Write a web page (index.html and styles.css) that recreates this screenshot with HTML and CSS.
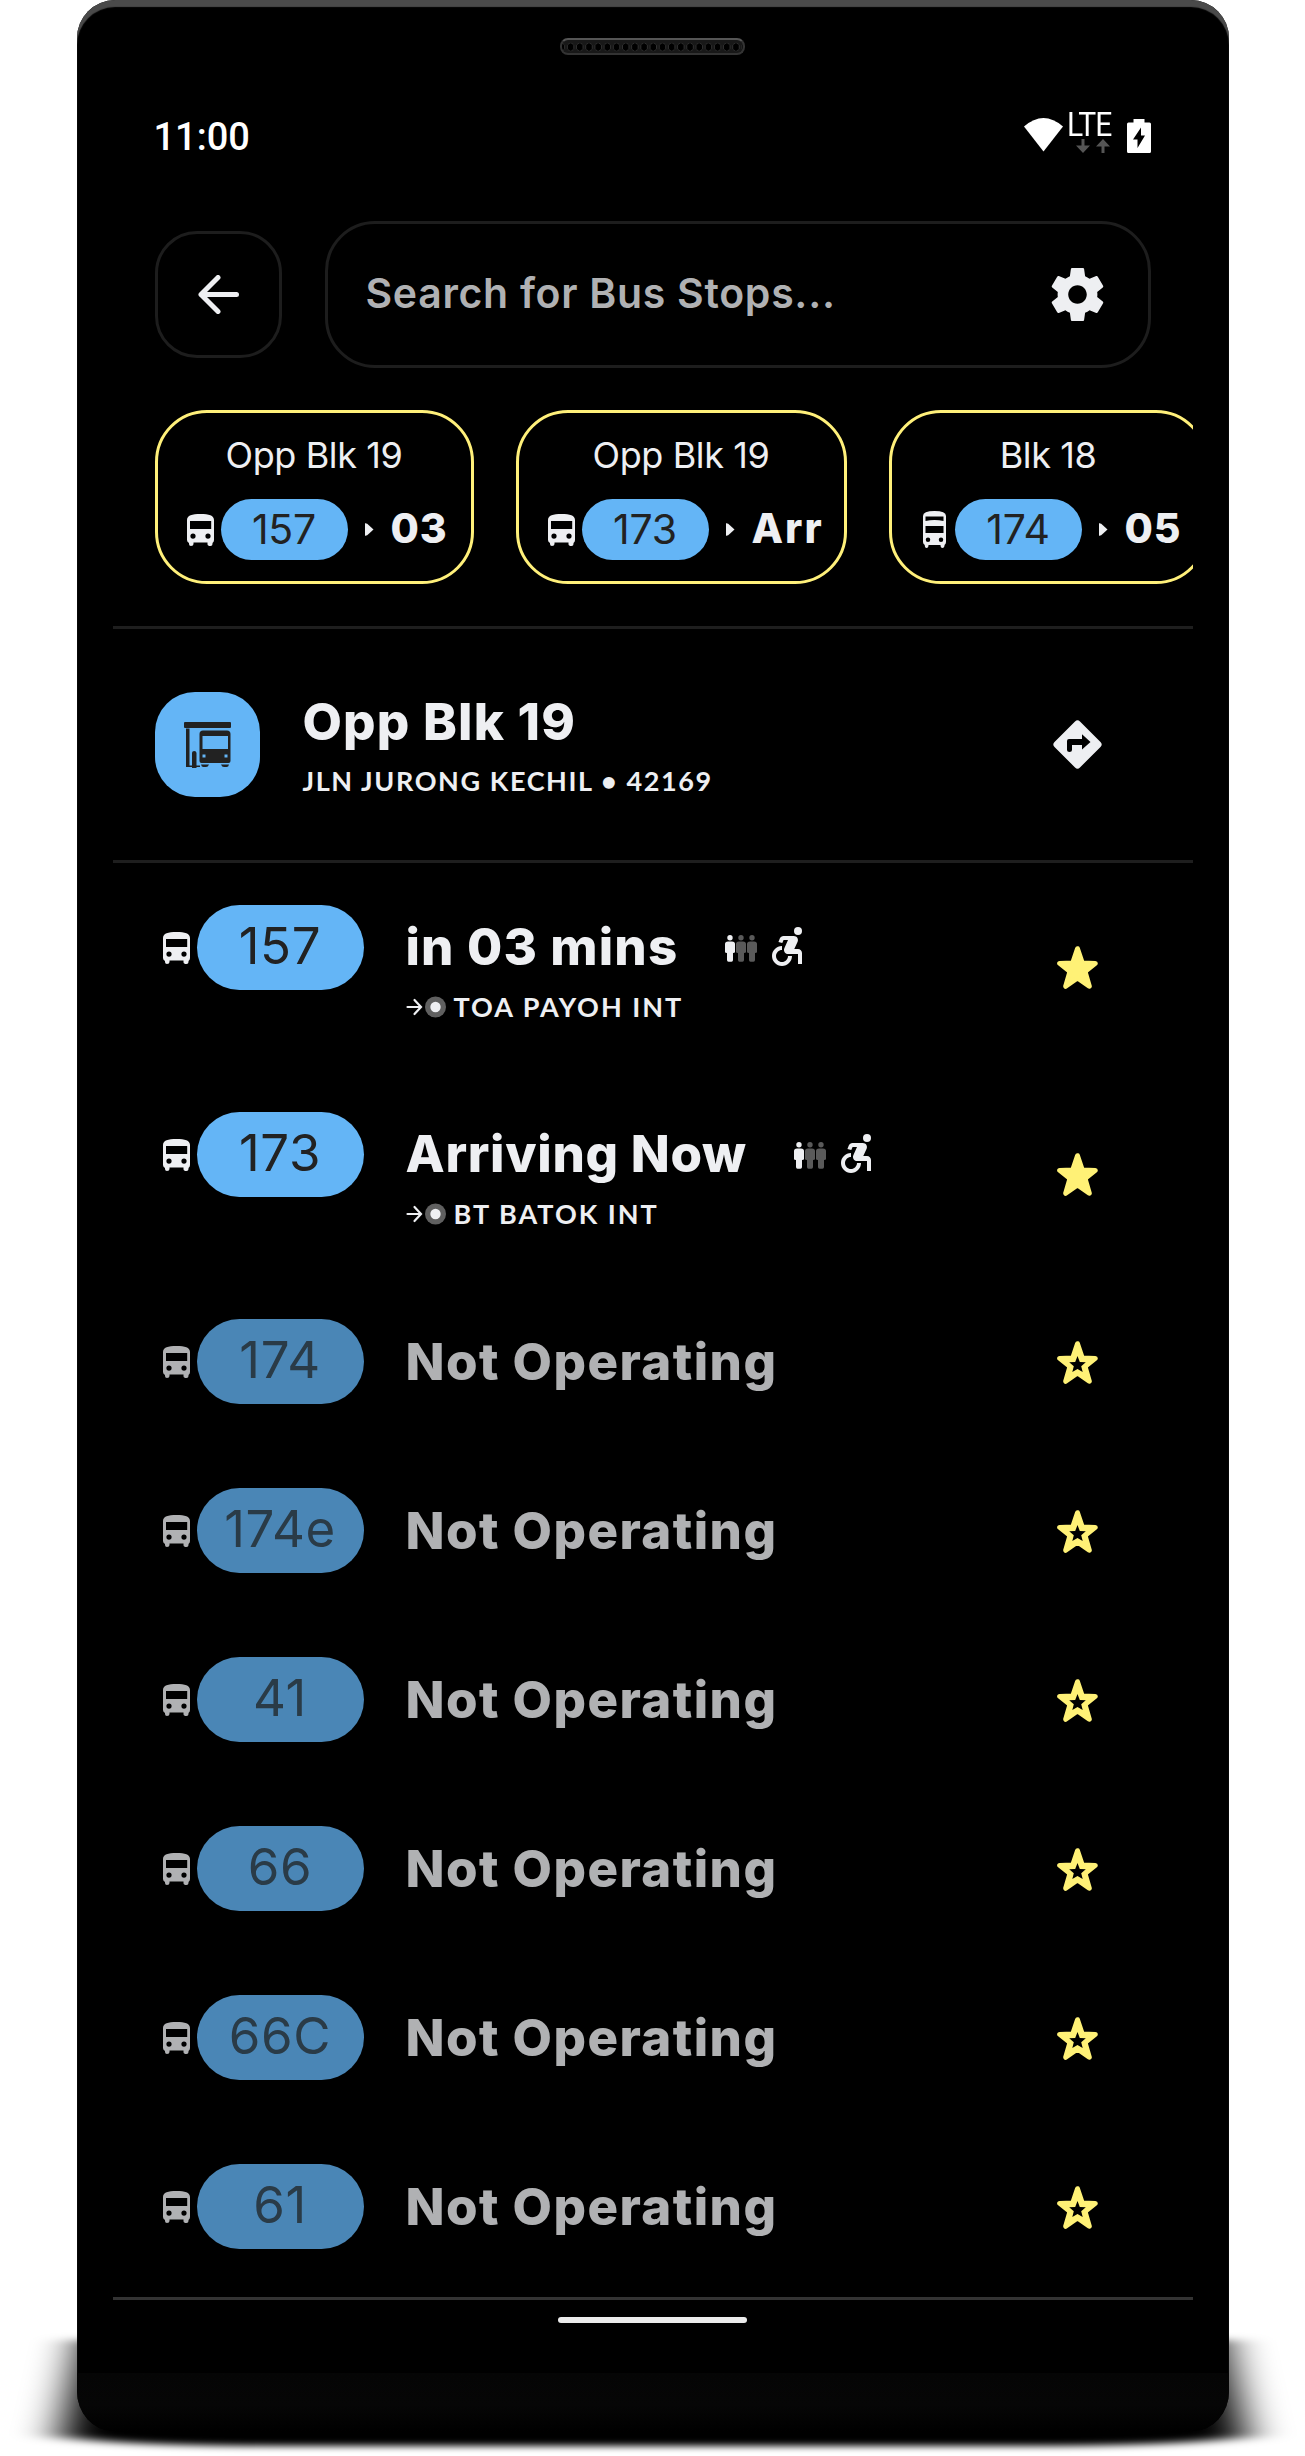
FILE: index.html
```html
<!DOCTYPE html>
<html lang="en">
<head>
<meta charset="utf-8">
<title>Bus Stops</title>
<link rel="stylesheet" href="styles.css">
</head>
<body>
<svg width="0" height="0" class="sprite" aria-hidden="true">
  <symbol id="bus" viewBox="0 0 27 32"><path fill-rule="evenodd" d="M0 6C0 1.500 5 0 13.500 0S27 1.500 27 6V26Q27 28 25.500 29V30Q25.500 32 23.500 32Q20.500 32 20.500 30V28.500H6.500V30Q6.500 32 4 32Q2 32 2 30V29Q0 28 0 26ZM3 7V15H24.200V7ZM6 19.500A2.600 2.600 0 1 0 6 24.700A2.600 2.600 0 1 0 6 19.500M21 19.500A2.600 2.600 0 1 0 21 24.700A2.600 2.600 0 1 0 21 19.500"/></symbol>
  <symbol id="decker" viewBox="0 0 23 37"><path fill-rule="evenodd" d="M0 5Q0 0 11.500 0T23 5V31Q23 33 21.500 34V35Q21 37 19.500 37Q17.500 37 17.500 34H5.500Q5.500 37 3.500 37Q2 37 1.800 35V34Q0 33 0 31ZM2.500 5.500V10Q11.500 8 20.500 10V5.500ZM2.500 15V22H20.500V15ZM5 26.500A2.200 2.200 0 1 0 5 31A2.200 2.200 0 1 0 5 26.500M18 26.500A2.200 2.200 0 1 0 18 31A2.200 2.200 0 1 0 18 26.500"/></symbol>
  <symbol id="person" viewBox="0 0 10 27"><circle cx="5" cy="2.800" r="2.700"/><path d="M3 6.500H7Q10 6.500 10 9V17Q10 18 8 18V25Q8 26.700 6.500 26.700H3.500Q2 26.700 2 25V18Q0 18 0 17V9Q0 6.500 3 6.500Z"/></symbol>
  <symbol id="wheelchair" viewBox="5 2.500 15 19.500"><circle cx="18" cy="4.540" r="2"/><path d="M15 17h-2c0 1.650-1.350 3-3 3s-3-1.350-3-3 1.350-3 3-3v-2c-2.760 0-5 2.240-5 5s2.240 5 5 5 5-2.240 5-5zM18 13.500h-1.860l1.670-3.670C18.420 8.500 17.440 7 15.960 7h-5.200c-.810 0-1.540.470-1.870 1.200L8.220 10l1.920.530.650-1.530H13l-1.830 4.100c-.600 1.330.390 2.900 1.850 2.900H18v5h2v-5.500c0-1.100-.900-2-2-2z"/></symbol>
  <symbol id="star" viewBox="0 0 41 43"><path d="M20.500 2.700L25.300 17L38.300 17.400L28 25.500L32.300 40.300L20.500 32L8.700 40.300L13 25.500L2.700 17.400L15.700 17Z" stroke="#fff176" stroke-width="5" stroke-linejoin="round"/></symbol>
  <symbol id="star-open" viewBox="0 0 41 43"><use href="#star"/><path fill="#000" d="M20.500 15L22.800 21L28.800 21.300L24.200 25.200L25.700 31L20.500 28L15.300 31L16.800 25.200L12.200 21.300L18.200 21Z"/></symbol>
  <symbol id="dest" viewBox="0 0 40 22"><path d="M1.500 11H14.500M8.500 4L15 11L8.500 18" fill="none" stroke="#eeeff2" stroke-width="2.200" stroke-linecap="round"/><circle cx="29.500" cy="11" r="10.500" fill="#606060"/><circle cx="29.500" cy="11" r="5.200"/></symbol>
</svg>

<svg class="ground-shadow" width="1305" height="156" viewBox="0 2300 1305 156">
  <defs><filter id="soft" x="-10%" y="-50%" width="120%" height="200%"><feGaussianBlur stdDeviation="22 3.500"/></filter></defs>
  <path filter="url(#soft)" d="M82 2340H1224Q1237 2400 1246 2436Q1200 2445 1050 2446H255Q105 2445 60 2436Q69 2400 82 2340Z"/>
</svg>

<div class="phone">
  <div class="speaker"></div>
  <div class="screen">
    <div class="status">
      <span class="clock">11:00</span>
      <div class="signals">
        <svg width="39" height="34" viewBox="0 0 39 34"><path d="M0 8.500Q19.500 -8.500 39 8.500L19.500 33.500Z"/></svg>
        <div class="network"><span>LTE</span>
          <svg width="34" height="14" viewBox="0 0 34 14"><path fill="#555" d="M5.500 0H8.500V6.500H14L7 14L0 6.500H5.500ZM25.500 14H28.500V7.500H34L27 0L20 7.500H25.500Z"/></svg>
        </div>
        <svg class="battery" width="24" height="34" viewBox="0 0 24 34"><path fill-rule="evenodd" d="M6.500 0H17.500V3.500H22.500Q24 3.500 24 5V32.500Q24 34 22.500 34H1.500Q0 34 0 32.500V5Q0 3.500 1.500 3.500H6.500ZM14 8.500L6 20.500H10.500V29L18 16.500H14Z"/></svg>
      </div>
    </div>

    <header class="toolbar">
      <button class="back"><svg width="41" height="39" viewBox="0 0 41 39"><path d="M38.500 19.500H3M20 2.500L3 19.500L20 36.500" fill="none" stroke="#eeeff2" stroke-width="5" stroke-linecap="round" stroke-linejoin="round"/></svg></button>
      <div class="search"><span>Search for Bus Stops...</span>
        <svg width="53" height="53" viewBox="2 2 20 20"><path d="M19.430 12.980c.040-.320.070-.640.070-.980s-.030-.660-.070-.980l2.110-1.650c.190-.150.240-.420.120-.640l-2-3.460c-.120-.220-.390-.300-.610-.220l-2.490 1c-.520-.400-1.080-.730-1.690-.980l-.380-2.650C14.460 2.180 14.250 2 14 2h-4c-.250 0-.460.180-.490.420l-.380 2.650c-.610.250-1.170.590-1.690.980l-2.490-1c-.230-.090-.490 0-.610.220l-2 3.460c-.130.220-.070.490.120.640l2.110 1.650c-.040.320-.070.650-.070.980s.030.660.070.980l-2.110 1.650c-.190.150-.240.420-.120.640l2 3.460c.120.220.390.300.610.220l2.490-1c.520.400 1.080.730 1.690.980l.380 2.650c.030.240.240.420.490.420h4c.250 0 .460-.180.490-.420l.380-2.650c.610-.250 1.170-.590 1.690-.980l2.490 1c.230.090.490 0 .610-.220l2-3.460c.120-.220.070-.490-.120-.640l-2.110-1.650zM12 15.500c-1.930 0-3.500-1.570-3.500-3.500s1.570-3.500 3.500-3.500 3.500 1.570 3.500 3.500-1.570 3.500-3.500 3.500z"/></svg>
      </div>
    </header>

    <div class="favs">
      <div class="fav"><span class="fav-stop">Opp Blk 19</span>
        <div class="fav-line"><svg width="27" height="32"><use href="#bus"/></svg><span class="pill small">157</span><i class="caret"></i><b>03</b></div></div>
      <div class="fav wide"><span class="fav-stop">Opp Blk 19</span>
        <div class="fav-line"><svg width="27" height="32"><use href="#bus"/></svg><span class="pill small">173</span><i class="caret"></i><b class="arr">Arr</b></div></div>
      <div class="fav"><span class="fav-stop">Blk 18</span>
        <div class="fav-line"><svg width="27" height="37"><use href="#decker"/></svg><span class="pill small">174</span><i class="caret"></i><b>05</b></div></div>
    </div>

    <section class="stop">
      <div class="stop-icon"><svg width="47" height="46" viewBox="0 0 47 46"><path fill="#222" fill-rule="evenodd" d="M1 0H46Q47 0 47 1V5Q47 6 46 6H1Q0 6 0 5V1Q0 0 1 0ZM2 6.500H5.500V43.500H8V31Q8 29 10.200 29T12.500 31V43.500H16V45H12.500V46H8V45H2ZM15.500 12Q15.500 8.500 19 8.500H43Q46.500 8.500 46.500 12V39Q46.500 41 44.500 41H17.500Q15.500 41 15.500 39ZM18.500 14V27H44V14ZM18.500 32.500V35.500H21.500V32.500ZM40.500 32.500V35.500H43.500V32.500ZM17 42.500H25Q24 45 22 45H19.500Q17.500 45 17 42.500ZM37 42.500H45Q44.500 45 42.500 45H40Q38 45 37 42.500Z"/></svg></div>
      <div class="stop-text"><h1>Opp Blk 19</h1><p>JLN JURONG KECHIL • 42169</p></div>
      <svg class="directions" width="53" height="53" viewBox="0 0 53 53"><rect x="8.500" y="8.500" width="36" height="36" rx="3.500" transform="rotate(45 26.500 26.500)"/><path fill="#000" d="M16 23Q16 21 18 21H31V16.200L39.500 24L31 31.500V27H21V32Q21 34 18.500 34T16 32Z"/></svg>
    </section>

    <main class="services">
      <div class="service tall">
        <svg class="bus" width="27" height="32"><use href="#bus"/></svg><span class="pill">157</span>
        <div class="info"><div class="eta"><b class="mins">in 03 mins</b><span class="load"><svg><use href="#person"/></svg><svg><use href="#person"/></svg><svg><use href="#person"/></svg></span><svg width="30" height="39"><use href="#wheelchair"/></svg></div>
          <div class="dest"><svg width="40" height="22"><use href="#dest"/></svg><span>TOA PAYOH INT</span></div></div>
        <svg class="star"><use href="#star"/></svg>
      </div>
      <div class="service tall">
        <svg class="bus" width="27" height="32"><use href="#bus"/></svg><span class="pill">173</span>
        <div class="info"><div class="eta"><b class="now">Arriving Now</b><span class="load"><svg><use href="#person"/></svg><svg><use href="#person"/></svg><svg><use href="#person"/></svg></span><svg width="30" height="39"><use href="#wheelchair"/></svg></div>
          <div class="dest"><svg width="40" height="22"><use href="#dest"/></svg><span>BT BATOK INT</span></div></div>
        <svg class="star"><use href="#star"/></svg>
      </div>
      <div class="service off"><svg class="bus" width="27" height="32"><use href="#bus"/></svg><span class="pill">174</span><div class="info"><div class="eta"><b>Not Operating</b></div></div><svg class="star"><use href="#star-open"/></svg></div>
      <div class="service off"><svg class="bus" width="27" height="32"><use href="#bus"/></svg><span class="pill">174e</span><div class="info"><div class="eta"><b>Not Operating</b></div></div><svg class="star"><use href="#star-open"/></svg></div>
      <div class="service off"><svg class="bus" width="27" height="32"><use href="#bus"/></svg><span class="pill">41</span><div class="info"><div class="eta"><b>Not Operating</b></div></div><svg class="star"><use href="#star-open"/></svg></div>
      <div class="service off"><svg class="bus" width="27" height="32"><use href="#bus"/></svg><span class="pill">66</span><div class="info"><div class="eta"><b>Not Operating</b></div></div><svg class="star"><use href="#star-open"/></svg></div>
      <div class="service off"><svg class="bus" width="27" height="32"><use href="#bus"/></svg><span class="pill">66C</span><div class="info"><div class="eta"><b>Not Operating</b></div></div><svg class="star"><use href="#star-open"/></svg></div>
      <div class="service off"><svg class="bus" width="27" height="32"><use href="#bus"/></svg><span class="pill">61</span><div class="info"><div class="eta"><b>Not Operating</b></div></div><svg class="star"><use href="#star-open"/></svg></div>
    </main>
    <nav class="home"><div class="home-bar"></div></nav>
  </div>
  <div class="chin"></div>
</div>
</body>
</html>
```
FILE: styles.css
```css
* { box-sizing: border-box; }
body { margin: 0; width: 1305px; height: 2456px; position: relative; overflow: hidden; background: #fff; font-family: Inter, "Liberation Sans", sans-serif; color: #eeeff2; }
svg { fill: #eeeff2; flex: none; display: block; }
.sprite { position: absolute; }
.ground-shadow { position: absolute; left: 0; bottom: 0; fill: #000; }
.ground-shadow path { fill: #000; }

.phone { position: relative; width: 1152px; height: 2431px; margin: 0 auto; padding: 38px 36px 0; background: #000; border-radius: 38px 38px 36px 36px / 38px 38px 40px 40px; box-shadow: inset 0 7px 1px #4a4a4a; overflow: hidden; display: flex; flex-direction: column; }
.speaker { width: 185px; height: 17px; margin: 0 auto; border-radius: 8px; border: 2px solid #333; border-top-color: #555; background: radial-gradient(ellipse 3.300px 4px at 50% 54%, #000 85%, #363636 100%, #181818 115%) 4px 0 / 9.200px 13px repeat-x #181818; }
.screen { display: flex; flex-direction: column; width: 1080px; height: 2318px; }

.status { height: 166px; padding: 60px 42px 0 41px; display: flex; justify-content: space-between; }
.clock { font: 500 38px/45px Roboto, sans-serif; color: #fff; }
.signals { display: flex; height: 38px; align-items: flex-end; }
.signals svg { fill: #fff; }
.signals > svg:first-child { margin-bottom: 1px; }
.network { width: 46px; margin-left: 4px; height: 38px; }
.network span { display: block; font: 400 33px/20px Roboto, sans-serif; height: 24px; color: #fff; transform: scaleX(.91); transform-origin: 0 0; letter-spacing: -1px; }
.network svg { margin-left: 9px; }
.battery { margin-left: 14px; }

.toolbar { display: flex; align-items: center; gap: 43px; padding: 0 42px; height: 147px; }
.back { width: 127px; height: 127px; padding: 0; border: 3px solid #1d1d1d; border-radius: 42px; background: none; display: flex; align-items: center; justify-content: center; }
.search { flex: 1; height: 147px; border: 3px solid #1d1d1d; border-radius: 50px; padding: 0 44px 0 38px; display: flex; align-items: center; justify-content: space-between; }
.search span { font-size: 41px; font-weight: 600; letter-spacing: .7px; color: #b0b1b3; padding-bottom: 3px; }

.favs { display: flex; gap: 42px; height: 261px; padding: 42px 0 0 42px; border-bottom: 3px solid #1e1e1e; overflow: hidden; flex: none; }
.fav { flex: none; width: 319px; height: 174px; border: 3px solid #fff07a; border-radius: 52px; padding-top: 24px; }
.fav.wide { width: 331px; }
.fav-stop { display: block; text-align: center; font-size: 36px; line-height: 36px; height: 62px; letter-spacing: -.4px; }
.fav-line { display: flex; align-items: center; height: 61px; padding-left: 29px; }
.fav-line b { font-size: 41px; font-weight: 800; line-height: 58px; padding-bottom: 3px; letter-spacing: 1px; }
.fav-line .arr { letter-spacing: 2px; }
.caret { width: 9px; height: 13px; margin: 0 17px; background: #eeeff2; clip-path: polygon(0 0, 30% 5%, 100% 50%, 30% 95%, 0 100%); }

.pill { flex: none; display: flex; align-items: center; justify-content: center; width: 167px; height: 85px; padding-bottom: 4px; border-radius: 43px; background: #64b5f6; color: #222; font-size: 51px; letter-spacing: .6px; }
.pill.small { width: 127px; height: 61px; margin-left: 7px; border-radius: 31px; font-size: 41px; padding-bottom: 2px; letter-spacing: -.2px; }

.stop { display: flex; align-items: center; height: 234px; padding: 0 89px 0 42px; border-bottom: 3px solid #1e1e1e; flex: none; }
.stop-icon { width: 105px; height: 105px; border-radius: 40px; background: #64b5f6; display: flex; align-items: center; justify-content: center; }
.stop-text { flex: 1; padding: 15px 0 0 43px; }
h1 { margin: 0; font-size: 51px; line-height: 58px; font-weight: 800; letter-spacing: 1.200px; }
p { margin: 0; font: 700 27px/60px Lato, sans-serif; letter-spacing: 1.600px; }

.services { display: flex; flex-direction: column; gap: 84px; padding: 42px 95px 48px 50px; }
.service { display: flex; align-items: center; height: 85px; }
.service.tall { height: 123px; align-items: flex-start; }
.bus { margin-top: 1px; }
.tall .bus { margin-top: 27px; }
.service .pill { margin-left: 7px; }
.info { flex: 1; padding-left: 42px; }
.eta { display: flex; align-items: center; height: 82px; }
.eta b { font-size: 51px; font-weight: 800; letter-spacing: 1.450px; white-space: nowrap; }
.load { display: flex; gap: 1px; margin: 4px 15px 0 0; }
.load svg { width: 10px; height: 27px; }
.load svg + svg { fill: #5a5a5a; }
.dest { display: flex; align-items: center; gap: 8px; height: 40px; font: 700 27px/40px Lato, sans-serif; letter-spacing: 2px; }
.star { width: 41px; height: 43px; margin-top: 2px; fill: #fff176; }
.tall .star { align-self: center; }
.off .bus, .off .pill, .off .eta { opacity: .74; }
.off .pill { color: #395061; }
.eta .mins { width: 319px; letter-spacing: 1.150px; }
.eta .now { width: 388px; letter-spacing: .7px; }

.home { border-top: 3px solid #333; padding-top: 17px; }
.home-bar { width: 189px; height: 6px; border-radius: 3px; margin: 0 auto; background: #ebebeb; }
.chin { height: 58px; margin: 0 -36px; flex: none; background: linear-gradient(#050505, #060606 55%, #000); }
```
